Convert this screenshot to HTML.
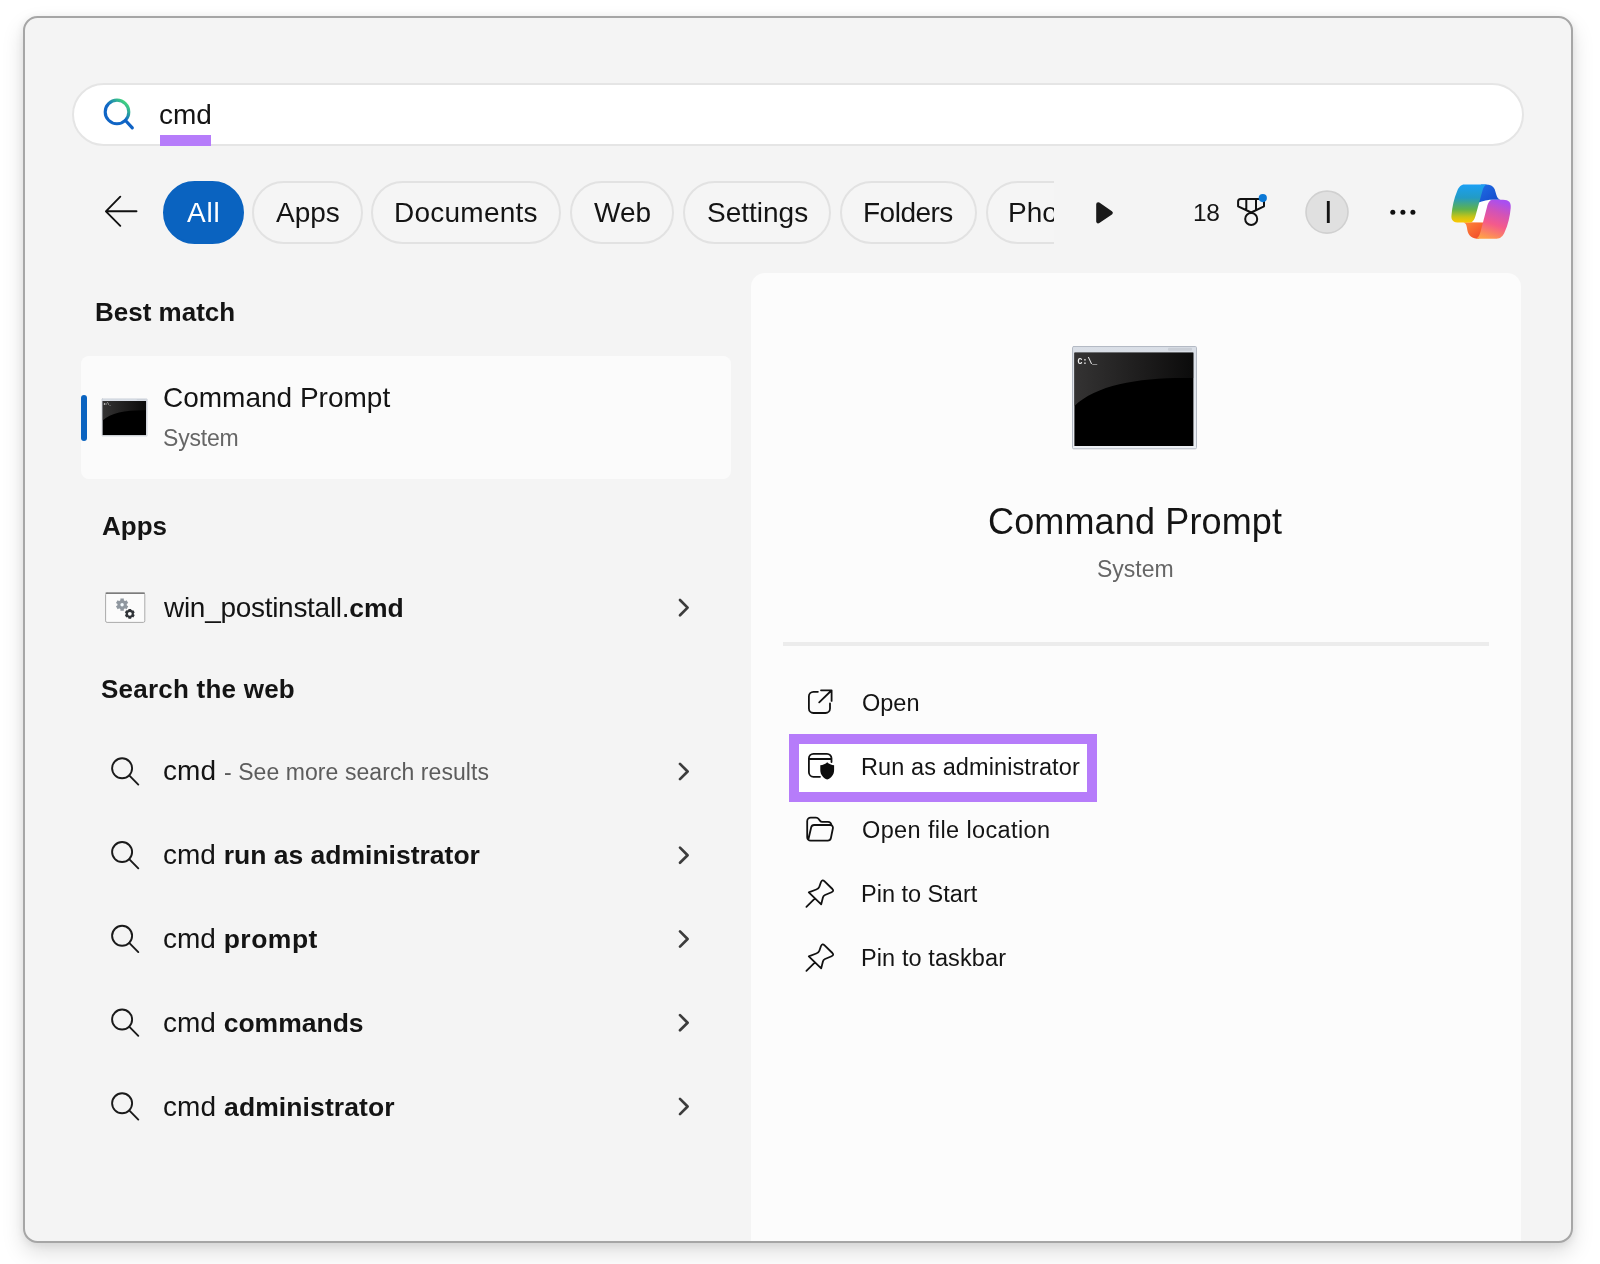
<!DOCTYPE html>
<html><head><meta charset="utf-8">
<style>
*{box-sizing:border-box;margin:0;padding:0}
html,body{width:1600px;height:1264px;background:#fff;overflow:hidden}
body{font-family:"Liberation Sans",sans-serif;color:#141414;position:relative}
.win{position:absolute;left:23.4px;top:16.4px;width:1549.4px;height:1226.2px;border-radius:14.5px;background:#f4f4f4;border:2px solid #a6a6a6;box-shadow:0 10px 22px rgba(0,0,0,.13),0 2px 8px rgba(0,0,0,.08);overflow:hidden}
.abs{position:absolute}
.t{position:absolute;white-space:nowrap;line-height:1;transform-origin:left center;will-change:transform}
.search{position:absolute;left:72px;top:83px;width:1452px;height:63px;border-radius:32px;background:#fff;border:2px solid #e5e5e5}
.pill{position:absolute;top:180.5px;height:63.5px;border-radius:32px;border:2px solid #e2e2e2;background:#f5f5f5}
.pill.on{background:#0a63c0;border-color:#0a63c0}
.b{font-weight:bold}
svg{position:absolute;overflow:visible}
</style></head><body>
<div class="win"></div>
<div class="search"></div>
<!-- tabs -->
<div class="pill on" style="left:163px;width:81px"></div>
<div class="pill" style="left:252px;width:111px"></div>
<div class="pill" style="left:371px;width:190px"></div>
<div class="pill" style="left:570px;width:104px"></div>
<div class="pill" style="left:683px;width:148px"></div>
<div class="pill" style="left:840px;width:137px"></div>
<!-- cards -->
<div class="abs" style="left:81px;top:356px;width:650px;height:123px;border-radius:8px;background:#fbfbfb"></div>
<div class="abs" style="left:81px;top:395px;width:6px;height:46px;border-radius:3px;background:#0a63c0"></div>
<div class="abs" style="left:750.5px;top:272.5px;width:770.5px;height:968px;border-radius:14px 14px 0 0;background:#fcfcfc"></div>
<div class="abs" style="left:782.5px;top:641.6px;width:706.5px;height:4.2px;background:#ececec"></div>
<div class="abs" style="left:788.5px;top:733.8px;width:308.5px;height:68px;border:10px solid #b67cfa;background:#fff"></div>
<div class="abs" style="left:160px;top:135px;width:51px;height:10.6px;background:#b67cfa"></div>

<!--ICONS-->
<svg width="1600" height="1264" viewBox="0 0 1600 1264" style="left:0;top:0;will-change:transform" fill="none" stroke-linecap="round" stroke-linejoin="round">
<defs>
<linearGradient id="sg" x1="106" y1="125" x2="128" y2="100" gradientUnits="userSpaceOnUse"><stop offset="0" stop-color="#0f62c4"/><stop offset=".5" stop-color="#1068c6"/><stop offset=".9" stop-color="#42d47e"/><stop offset="1" stop-color="#42d47e"/></linearGradient>
<linearGradient id="gl" x1="0" y1="0" x2="1" y2="0"><stop offset="0" stop-color="#343333"/><stop offset=".6" stop-color="#1c1b1b"/><stop offset="1" stop-color="#0b0b0b"/></linearGradient>
<linearGradient id="fr" x1="0" y1="0" x2="0" y2="1"><stop offset="0" stop-color="#d9dee6"/><stop offset="1" stop-color="#eceff4"/></linearGradient>
<linearGradient id="c1" x1="0" y1="0" x2="0" y2="1"><stop offset="0" stop-color="#1aa0f5"/><stop offset=".35" stop-color="#239bc4"/><stop offset=".65" stop-color="#5fb24d"/><stop offset=".85" stop-color="#c8c417"/><stop offset="1" stop-color="#ffc800"/></linearGradient>
<linearGradient id="c2" x1="0.6" y1="0" x2="0.3" y2="1"><stop offset="0" stop-color="#a94ff0"/><stop offset=".3" stop-color="#d353b6"/><stop offset=".6" stop-color="#f45a8c"/><stop offset=".85" stop-color="#fb8462"/><stop offset="1" stop-color="#ffa04a"/></linearGradient>
<linearGradient id="c3" x1="0" y1="0" x2="1" y2="1"><stop offset="0" stop-color="#1f6fe6"/><stop offset="1" stop-color="#1447c8"/></linearGradient>
<linearGradient id="c4" x1="0" y1="0" x2="1" y2="1"><stop offset="0" stop-color="#ff8a3a"/><stop offset="1" stop-color="#f0452a"/></linearGradient>
<clipPath id="cpb"><rect x="2.4" y="6.6" width="119" height="93.4"/></clipPath>
<symbol id="cmdicon" viewBox="0 0 125 103" overflow="visible">
<rect x="0.5" y="0.5" width="124" height="102.3" rx="1.2" fill="url(#fr)" stroke="#b4bac4" stroke-width="1"/>
<rect x="2.4" y="6.6" width="119" height="93.4" fill="#000"/>
<path clip-path="url(#cpb)" d="M2.4 6.6 H121.4 V32 C 70 31, 25 38, 2.4 60 Z" fill="url(#gl)"/>
<rect x="96" y="1.8" width="24" height="3" rx="1" fill="#c9ced6"/>
<text x="5.6" y="17.8" font-family="Liberation Mono, monospace" font-weight="bold" font-size="8.2" fill="#f2f2f2" stroke="none">C:\_</text>
</symbol>
<symbol id="mag" viewBox="-16 -16 32 32" overflow="visible"><circle cx="0" cy="0" r="10" stroke="#1a1a1a" stroke-width="1.9"/><path d="M7.1 7.1 L16.2 16.3" stroke="#1a1a1a" stroke-width="1.9"/></symbol>
<symbol id="chev" viewBox="-8 -12 16 24" overflow="visible"><path d="M-3.8 -7.6 L3.8 0 L-3.8 7.6" stroke="#3c3c3c" stroke-width="2.7"/></symbol>
<symbol id="pin" viewBox="0 0 40 40" overflow="visible"><path d="M6.4 36.8 L14.7 28.7 M8.8 22.4 L16.3 19.5 Q18.6 18.6 19.5 16.3 L21 12 Q22.3 9 24.6 11.3 L32.4 19 Q34.3 21 31.6 22.2 L25 25 Q23.3 25.8 22.9 27.5 L21.2 34.4 Z" stroke="#111" stroke-width="1.8"/></symbol>
</defs>
<!-- search bar icon -->
<circle cx="117" cy="111.9" r="11.8" stroke="url(#sg)" stroke-width="3.1"/>
<path d="M125.5 120.5 L132.3 127.9" stroke="#0f62c4" stroke-width="3.2"/>
<!-- back arrow -->
<path d="M136.5 211.3 H106 M120.3 196.7 L105.9 211.3 L120.3 225.8" stroke="#111" stroke-width="1.9"/>
<!-- play -->
<path d="M1098.2 204.2 L1110.8 212.8 L1098.2 221.4 Z" fill="#1a1a1a" stroke="#1a1a1a" stroke-width="4"/>
<!-- medal -->
<path d="M1240.6 199 H1264 V206.3 L1251.2 212.5 L1238.1 206.3 V201.5 Q1238.1 199 1240.6 199 Z M1246.3 199 V209.8 M1256 199 V209.8" stroke="#111" stroke-width="2"/>
<circle cx="1251.2" cy="219" r="6" stroke="#111" stroke-width="2"/>
<circle cx="1262.8" cy="198.1" r="4.1" fill="#0a78d6"/>
<!-- avatar -->
<circle cx="1327" cy="212.1" r="21" fill="#e0e0e0" stroke="#d0d0d0" stroke-width="1.6"/>
<!-- dots -->
<circle cx="1392.8" cy="212.3" r="2.5" fill="#111"/><circle cx="1402.9" cy="212.3" r="2.5" fill="#111"/><circle cx="1412.9" cy="212.3" r="2.5" fill="#111"/>
<!-- copilot -->
<g transform="translate(1451 184)">
<path d="M21 39.5 L29.5 15 L43 15 L32 40 Z" fill="#fff"/>
<path d="M30 0.4 H34 C38.5 0.2 42 1.5 43.6 5 L45.5 11.3 C46.2 13.6 47 15 49.5 15.7 L39.8 15.7 C37 15.9 33 16.5 26 19 Z" fill="url(#c3)"/>
<path d="M12 38.2 C15 38.8 15.8 42 16 44 C16.6 49.5 19 54.2 25.8 54.7 H28 L33.5 38.6 Z" fill="url(#c4)"/>
<path d="M13.4 0.5 H36 C33.5 1 32.3 4 31.5 6.5 L25 30 C23.8 34.5 22.6 38.6 18 38.6 H8.5 C2.5 38.6 -0.2 36.5 0.5 31 C1.2 23 3 14 6.2 6.9 C7.8 3 10 0.5 13.4 0.5 Z" fill="url(#c1)"/>
<path d="M41.8 15.7 H52 C58 15.7 60.3 18.5 59.7 24 C59 32 57 41 53.7 48 C52 52 49.5 54.7 45.5 54.7 H24.5 C27.5 54.2 28.5 51 29.6 47.5 L36 23 C37 19 38.5 15.7 41.8 15.7 Z" fill="url(#c2)"/>
</g>
<!-- cmd icons -->
<use href="#cmdicon" x="1072" y="346" width="125" height="103"/>
<use href="#cmdicon" x="101.3" y="398.6" width="46.5" height="37.6"/>
<!-- gear script icon -->
<rect x="105.6" y="593.2" width="39.2" height="29.2" rx="1.5" fill="#fbfbfb" stroke="#aaa" stroke-width="1"/>
<path d="M106 593.1 H144.4" stroke="#666" stroke-width="1.1"/>
<g stroke="#8f979f" stroke-width="3.4" stroke-linecap="butt"><circle cx="122.1" cy="604.7" r="3.2" stroke-width="3"/><path d="M122.1 598.6v12.2M116.8 601.65l10.6 6.1M116.8 607.75l10.6-6.1"/></g>
<circle cx="122.1" cy="604.7" r="1.7" fill="#f4fbff"/>
<g stroke="#2f3337" stroke-width="2.8" stroke-linecap="butt"><circle cx="129.8" cy="613.8" r="3" stroke-width="2.2"/><path d="M129.8 608.9v9.8M125.55 611.35l8.5 4.9M125.55 616.25l8.5-4.9"/></g>
<circle cx="129.8" cy="613.8" r="1.9" fill="#fbfbfb"/>
<!-- row icons -->
<use href="#mag" x="106.1" y="752.3" width="32" height="32"/>
<use href="#mag" x="106.1" y="836.05" width="32" height="32"/>
<use href="#mag" x="106.1" y="919.8" width="32" height="32"/>
<use href="#mag" x="106.1" y="1003.55" width="32" height="32"/>
<use href="#mag" x="106.1" y="1087.3" width="32" height="32"/>
<use href="#chev" x="675.8" y="595.6" width="16" height="24"/>
<use href="#chev" x="675.8" y="759.5" width="16" height="24"/>
<use href="#chev" x="675.8" y="843.2" width="16" height="24"/>
<use href="#chev" x="675.8" y="927" width="16" height="24"/>
<use href="#chev" x="675.8" y="1010.7" width="16" height="24"/>
<use href="#chev" x="675.8" y="1094.5" width="16" height="24"/>
<!-- action icons -->
<path d="M817.9 691.8 H813.4 a4.5 4.5 0 0 0 -4.5 4.5 V708.5 a4.5 4.5 0 0 0 4.5 4.5 H825.5 a4.5 4.5 0 0 0 4.5 -4.5 V703.5 M821 690.3 H831.6 V700.9 M831.4 690.5 L819.2 702.3" stroke="#111" stroke-width="1.8"/>
<path d="M820 776.8 H813.4 a4.5 4.5 0 0 1 -4.5 -4.5 V758.3 a4.5 4.5 0 0 1 4.5 -4.5 H827 a4.5 4.5 0 0 1 4.5 4.5 V762 M808.9 759 H831.5" stroke="#111" stroke-width="1.8"/>
<path d="M827.2 762.2 C825.5 764 823 765 820.3 765.2 V770 C820.3 775 823.5 778 827.2 779.6 C831 778 834.1 775 834.1 770 V765.2 C831.5 765 829 764 827.2 762.2 Z" fill="#0d0d0d"/>
<path d="M807.2 836 V821.2 a3.5 3.5 0 0 1 3.5 -3.5 H816 c1.2 0 2 .4 2.7 1.3 l1.2 1.6 c.6 .8 1.4 1.2 2.4 1.2 H828 a3.5 3.5 0 0 1 3.5 3.5 M808.6 838.5 L811.2 827.3 a3 3 0 0 1 2.9 -2.3 H830.3 a2.6 2.6 0 0 1 2.6 3.2 L830.9 838 a3.3 3.3 0 0 1 -3.2 2.6 H810.6 a3.4 3.4 0 0 1 -3.4 -3.4 V836" stroke="#111" stroke-width="1.8"/>
<use href="#pin" x="800" y="870" width="40" height="40"/>
<use href="#pin" x="800" y="934" width="40" height="40"/>
</svg>
<!--/ICONS-->
<!--TEXT-->
<div class="t" id="s_cmd" style="left:159.0px;top:101.0px;font-size:28px;">cmd</div>
<div class="t" id="t_all" style="left:187.0px;top:199.0px;font-size:28px;letter-spacing:0.80px;color:#fff">All</div>
<div class="t" id="t_apps" style="left:276.0px;top:199.0px;font-size:28px;">Apps</div>
<div class="t" id="t_docs" style="left:394.0px;top:199.0px;font-size:28px;letter-spacing:0.25px;">Documents</div>
<div class="t" id="t_web" style="left:594.0px;top:199.0px;font-size:28px;">Web</div>
<div class="t" id="t_set" style="left:707.0px;top:199.0px;font-size:28px;">Settings</div>
<div class="t" id="t_fold" style="left:863.0px;top:199.0px;font-size:28px;letter-spacing:-0.50px;">Folders</div>
<div class="abs" style="left:980px;top:170px;width:73.5px;height:84px;overflow:hidden"><div class="pill" style="left:6px;top:10.5px;width:100px"></div><div class="t" id="t_pho" style="left:28.0px;top:29.0px;font-size:28px;">Pho</div></div>
<div class="t" id="t_18" style="left:1193.0px;top:201.0px;font-size:24.5px;letter-spacing:-0.50px;">18</div>
<div class="t" id="t_I" style="left:1323.5px;top:197.0px;font-size:31px;">I</div>
<div class="t" id="h_best" style="left:95.0px;top:299.0px;font-size:26px;font-weight:bold">Best match</div>
<div class="t" id="l_cp" style="left:163.0px;top:384.0px;font-size:28px;">Command Prompt</div>
<div class="t" id="l_sys" style="left:163.0px;top:427.0px;font-size:23px;letter-spacing:-0.20px;color:#666">System</div>
<div class="t" id="h_apps" style="left:102.0px;top:513.0px;font-size:26px;font-weight:bold">Apps</div>
<div class="t" id="l_win" style="left:164.0px;top:594.0px;font-size:28px;"><span style="letter-spacing:-.29px">win_postinstall.</span><b style="font-size:26.5px">cmd</b></div>
<div class="t" id="h_web" style="left:101.0px;top:676.0px;font-size:26px;letter-spacing:0.23px;font-weight:bold">Search the web</div>
<div class="t" id="w1" style="left:163.0px;top:757.0px;font-size:28px;letter-spacing:0.07px;">cmd <span style="font-size:23px;color:#5c5c5c">- See more search results</span></div>
<div class="t" id="w2" style="left:163.0px;top:841.0px;font-size:28px;">cmd <b style="font-size:26.5px">run as administrator</b></div>
<div class="t" id="w3" style="left:163.0px;top:925.0px;font-size:28px;">cmd <b style="font-size:26.5px;letter-spacing:.5px">prompt</b></div>
<div class="t" id="w4" style="left:163.0px;top:1009.0px;font-size:28px;">cmd <b style="font-size:26.5px">commands</b></div>
<div class="t" id="w5" style="left:163.0px;top:1093.0px;font-size:28px;letter-spacing:0.10px;">cmd <b style="font-size:26.5px">administrator</b></div>
<div class="t" id="r_cp" style="left:988.0px;top:504.0px;font-size:36px;letter-spacing:0.15px;">Command Prompt</div>
<div class="t" id="r_sys" style="left:1097.0px;top:558.0px;font-size:23px;color:#666">System</div>
<div class="t" id="a1" style="left:862.0px;top:692.0px;font-size:23.5px;">Open</div>
<div class="t" id="a2" style="left:861.0px;top:756.0px;font-size:23.5px;letter-spacing:0.10px;">Run as administrator</div>
<div class="t" id="a3" style="left:862.0px;top:819.0px;font-size:23.5px;letter-spacing:0.38px;">Open file location</div>
<div class="t" id="a4" style="left:861.0px;top:883.0px;font-size:23.5px;">Pin to Start</div>
<div class="t" id="a5" style="left:861.0px;top:947.0px;font-size:23.5px;letter-spacing:0.10px;">Pin to taskbar</div>
<!--/TEXT-->
</body></html>
